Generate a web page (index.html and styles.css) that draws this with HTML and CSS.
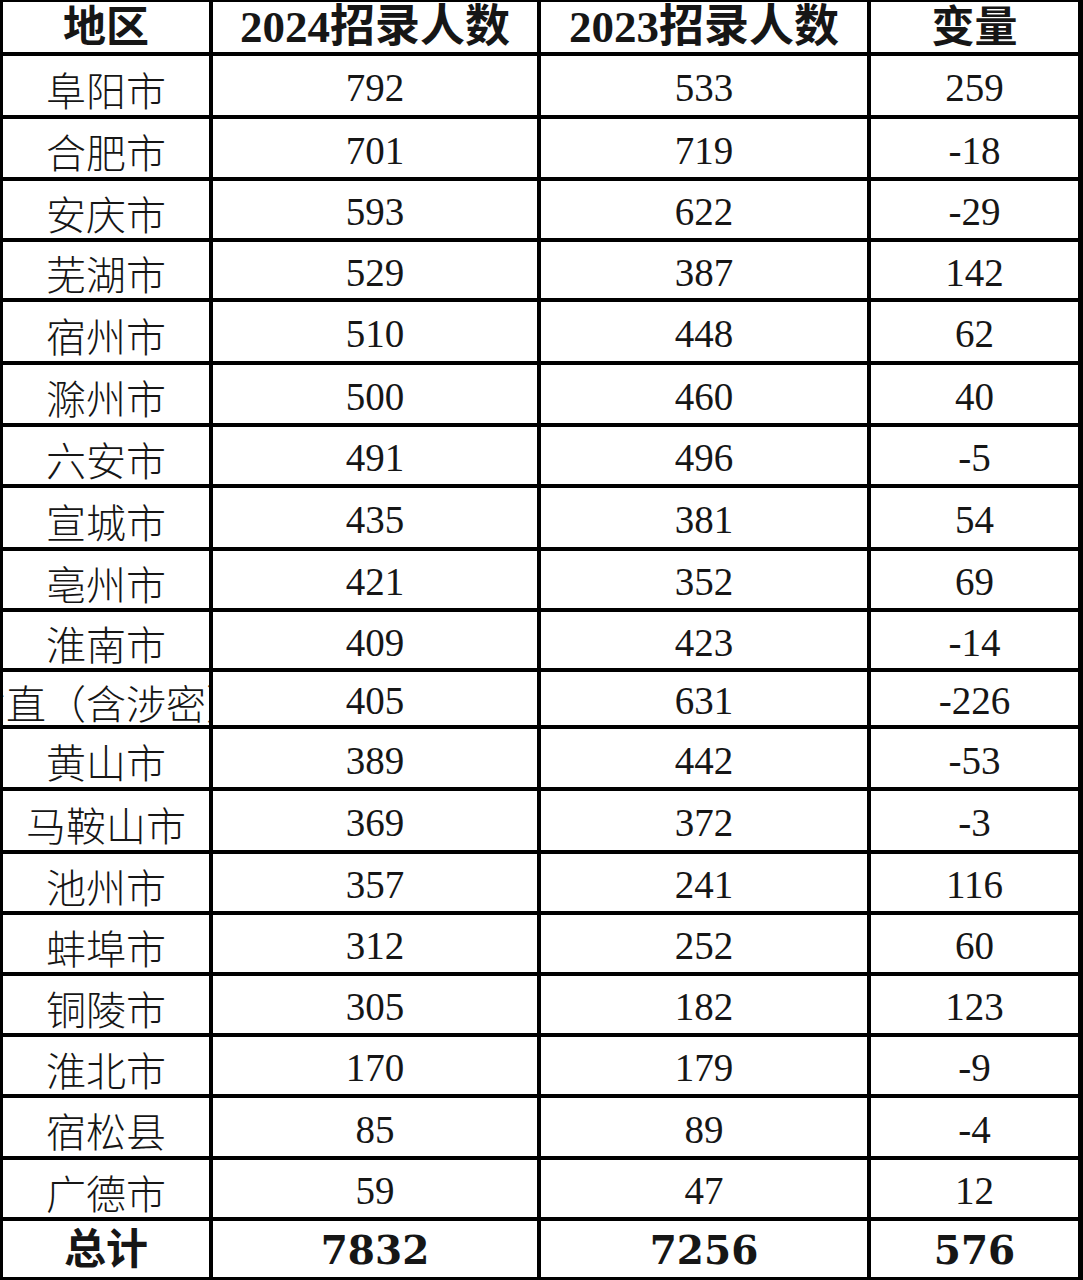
FILE: index.html
```html
<!DOCTYPE html>
<html lang="zh-CN">
<head>
<meta charset="utf-8">
<title>招录人数</title>
<link rel="stylesheet" href="styles.css">
</head>
<body>
<div class="sheet">
  <div class="cell head mix">地区</div>
  <div class="cell head mix wide">2024招录人数</div>
  <div class="cell head mix wide">2023招录人数</div>
  <div class="cell head mix">变量</div>

  <div class="cell cjk">阜阳市</div><div class="cell num">792</div><div class="cell num">533</div><div class="cell num">259</div>
  <div class="cell cjk">合肥市</div><div class="cell num">701</div><div class="cell num">719</div><div class="cell num">-18</div>
  <div class="cell cjk">安庆市</div><div class="cell num">593</div><div class="cell num">622</div><div class="cell num">-29</div>
  <div class="cell cjk">芜湖市</div><div class="cell num">529</div><div class="cell num">387</div><div class="cell num">142</div>
  <div class="cell cjk">宿州市</div><div class="cell num">510</div><div class="cell num">448</div><div class="cell num">62</div>
  <div class="cell cjk">滁州市</div><div class="cell num">500</div><div class="cell num">460</div><div class="cell num">40</div>
  <div class="cell cjk">六安市</div><div class="cell num">491</div><div class="cell num">496</div><div class="cell num">-5</div>
  <div class="cell cjk">宣城市</div><div class="cell num">435</div><div class="cell num">381</div><div class="cell num">54</div>
  <div class="cell cjk">亳州市</div><div class="cell num">421</div><div class="cell num">352</div><div class="cell num">69</div>
  <div class="cell cjk">淮南市</div><div class="cell num">409</div><div class="cell num">423</div><div class="cell num">-14</div>
  <div class="cell cjk clip"><span>省直（含涉密）</span></div><div class="cell num">405</div><div class="cell num">631</div><div class="cell num">-226</div>
  <div class="cell cjk">黄山市</div><div class="cell num">389</div><div class="cell num">442</div><div class="cell num">-53</div>
  <div class="cell cjk">马鞍山市</div><div class="cell num">369</div><div class="cell num">372</div><div class="cell num">-3</div>
  <div class="cell cjk">池州市</div><div class="cell num">357</div><div class="cell num">241</div><div class="cell num">116</div>
  <div class="cell cjk">蚌埠市</div><div class="cell num">312</div><div class="cell num">252</div><div class="cell num">60</div>
  <div class="cell cjk">铜陵市</div><div class="cell num">305</div><div class="cell num">182</div><div class="cell num">123</div>
  <div class="cell cjk">淮北市</div><div class="cell num">170</div><div class="cell num">179</div><div class="cell num">-9</div>
  <div class="cell cjk">宿松县</div><div class="cell num">85</div><div class="cell num">89</div><div class="cell num">-4</div>
  <div class="cell cjk">广德市</div><div class="cell num">59</div><div class="cell num">47</div><div class="cell num">12</div>

  <div class="cell total cjk">总计</div>
  <div class="cell total num">7832</div>
  <div class="cell total num">7256</div>
  <div class="cell total num">576</div>
</div>
</body>
</html>
```

FILE: styles.css
```css
html, body {
  margin: 0;
  padding: 0;
  background: #ffffff;
}

.sheet {
  width: 1083px;
  height: 1280px;
  box-sizing: border-box;
  display: grid;
  grid-template-columns: 206px 324px 326px 207px;
  grid-template-rows: 50px 59px 58px 57px 56px 59px 58px 57px 59px 57px 56px 53px 58px 59px 57px 57px 57px 57px 58px 57px 56px;
  gap: 4px;
  padding: 2px 5px 3px 3px;
  background: #000000;
}

.cell {
  background: #ffffff;
  color: #161616;
  display: flex;
  align-items: center;
  justify-content: center;
  padding-top: 6px;
  box-sizing: border-box;
  white-space: nowrap;
  line-height: 1.1;
}

.cjk {
  font-family: "Noto Sans CJK SC", "Noto Sans", sans-serif;
  font-size: 40px;
  font-weight: 300;
}

.num {
  font-family: "Liberation Serif", "Noto Sans CJK SC", serif;
  font-size: 39px;
}

.mix {
  font-family: "Liberation Serif", "Noto Sans CJK SC", serif;
}

.head {
  font-size: 43px;
  font-weight: 700;
  padding-top: 0;
  line-height: 1;
}

.head.wide {
  font-size: 45px;
}

.total {
  font-weight: 700;
  padding-top: 2px;
}

.total.cjk {
  font-family: "Liberation Serif", "Noto Sans CJK SC", serif;
  font-size: 42px;
}

.total.num {
  font-family: "DejaVu Serif", "Liberation Serif", serif;
  font-size: 39px;
}

.clip {
  overflow: hidden;
}

.clip span {
  flex: none;
}
```
